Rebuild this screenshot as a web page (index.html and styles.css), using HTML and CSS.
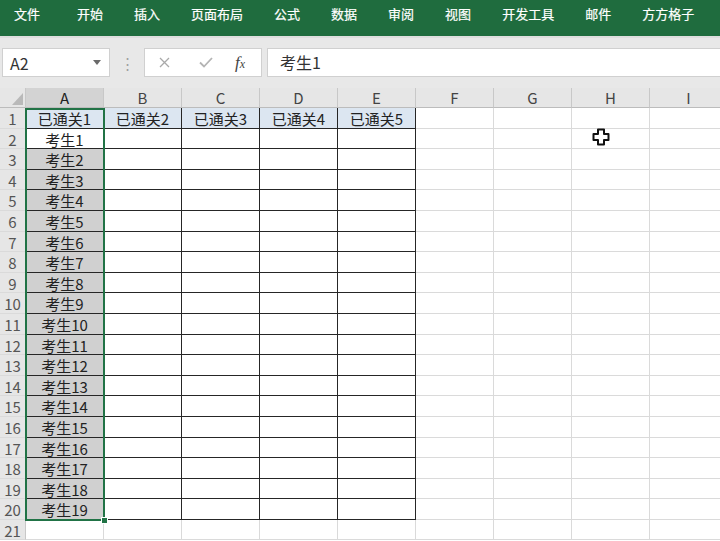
FILE: index.html
```html
<!DOCTYPE html>
<html lang="zh-CN">
<head>
<meta charset="utf-8">
<title>Excel</title>
<link rel="stylesheet" href="styles.css">
</head>
<body>
<div class="ribbon">
  <span class="tab first">文件</span><span class="tab">开始</span><span class="tab">插入</span><span class="tab">页面布局</span><span class="tab">公式</span><span class="tab">数据</span><span class="tab">审阅</span><span class="tab">视图</span><span class="tab">开发工具</span><span class="tab">邮件</span><span class="tab">方方格子</span>
</div>
<div class="fbar">
  <div class="namebox"><span>A2</span><svg class="arrow" width="8" height="5" viewBox="0 0 8 5"><path d="M0 0H8L4 5Z" fill="#6a6a6a"/></svg></div>
  <div class="dots">⋮</div>
  <div class="funcbox">
    <svg class="ic-x" width="11" height="11" viewBox="0 0 11 11"><path d="M1 1L10 10M10 1L1 10" stroke="#a9a9a9" stroke-width="1.3" fill="none"/></svg>
    <svg class="ic-ok" width="14" height="11" viewBox="0 0 14 11"><path d="M1 5.5L5 9.5L13 1" stroke="#b4b4b4" stroke-width="1.8" fill="none"/></svg>
    <span class="fx">f<small>x</small></span>
  </div>
  <div class="input">考生1</div>
</div>
<div class="sheet">
  <div class="corner"><svg width="26" height="20" viewBox="0 0 26 20"><path d="M23 5V17H12Z" fill="#b9b9b9"/></svg></div>
  <div class="ch sel">A</div><div class="ch">B</div><div class="ch">C</div><div class="ch">D</div><div class="ch">E</div><div class="ch">F</div><div class="ch">G</div><div class="ch">H</div><div class="ch">I</div>

  <div class="rh">1</div><div class="c t h">已通关1</div><div class="c t h">已通关2</div><div class="c t h">已通关3</div><div class="c t h">已通关4</div><div class="c t h">已通关5</div><div class="c"></div><div class="c"></div><div class="c"></div><div class="c"></div>
  <div class="rh">2</div><div class="c t">考生1</div><div class="c t"></div><div class="c t"></div><div class="c t"></div><div class="c t"></div><div class="c"></div><div class="c"></div><div class="c"></div><div class="c"></div>
  <div class="rh">3</div><div class="c t g">考生2</div><div class="c t"></div><div class="c t"></div><div class="c t"></div><div class="c t"></div><div class="c"></div><div class="c"></div><div class="c"></div><div class="c"></div>
  <div class="rh">4</div><div class="c t g">考生3</div><div class="c t"></div><div class="c t"></div><div class="c t"></div><div class="c t"></div><div class="c"></div><div class="c"></div><div class="c"></div><div class="c"></div>
  <div class="rh">5</div><div class="c t g">考生4</div><div class="c t"></div><div class="c t"></div><div class="c t"></div><div class="c t"></div><div class="c"></div><div class="c"></div><div class="c"></div><div class="c"></div>
  <div class="rh">6</div><div class="c t g">考生5</div><div class="c t"></div><div class="c t"></div><div class="c t"></div><div class="c t"></div><div class="c"></div><div class="c"></div><div class="c"></div><div class="c"></div>
  <div class="rh">7</div><div class="c t g">考生6</div><div class="c t"></div><div class="c t"></div><div class="c t"></div><div class="c t"></div><div class="c"></div><div class="c"></div><div class="c"></div><div class="c"></div>
  <div class="rh">8</div><div class="c t g">考生7</div><div class="c t"></div><div class="c t"></div><div class="c t"></div><div class="c t"></div><div class="c"></div><div class="c"></div><div class="c"></div><div class="c"></div>
  <div class="rh">9</div><div class="c t g">考生8</div><div class="c t"></div><div class="c t"></div><div class="c t"></div><div class="c t"></div><div class="c"></div><div class="c"></div><div class="c"></div><div class="c"></div>
  <div class="rh">10</div><div class="c t g">考生9</div><div class="c t"></div><div class="c t"></div><div class="c t"></div><div class="c t"></div><div class="c"></div><div class="c"></div><div class="c"></div><div class="c"></div>
  <div class="rh">11</div><div class="c t g">考生10</div><div class="c t"></div><div class="c t"></div><div class="c t"></div><div class="c t"></div><div class="c"></div><div class="c"></div><div class="c"></div><div class="c"></div>
  <div class="rh">12</div><div class="c t g">考生11</div><div class="c t"></div><div class="c t"></div><div class="c t"></div><div class="c t"></div><div class="c"></div><div class="c"></div><div class="c"></div><div class="c"></div>
  <div class="rh">13</div><div class="c t g">考生12</div><div class="c t"></div><div class="c t"></div><div class="c t"></div><div class="c t"></div><div class="c"></div><div class="c"></div><div class="c"></div><div class="c"></div>
  <div class="rh">14</div><div class="c t g">考生13</div><div class="c t"></div><div class="c t"></div><div class="c t"></div><div class="c t"></div><div class="c"></div><div class="c"></div><div class="c"></div><div class="c"></div>
  <div class="rh">15</div><div class="c t g">考生14</div><div class="c t"></div><div class="c t"></div><div class="c t"></div><div class="c t"></div><div class="c"></div><div class="c"></div><div class="c"></div><div class="c"></div>
  <div class="rh">16</div><div class="c t g">考生15</div><div class="c t"></div><div class="c t"></div><div class="c t"></div><div class="c t"></div><div class="c"></div><div class="c"></div><div class="c"></div><div class="c"></div>
  <div class="rh">17</div><div class="c t g">考生16</div><div class="c t"></div><div class="c t"></div><div class="c t"></div><div class="c t"></div><div class="c"></div><div class="c"></div><div class="c"></div><div class="c"></div>
  <div class="rh">18</div><div class="c t g">考生17</div><div class="c t"></div><div class="c t"></div><div class="c t"></div><div class="c t"></div><div class="c"></div><div class="c"></div><div class="c"></div><div class="c"></div>
  <div class="rh">19</div><div class="c t g">考生18</div><div class="c t"></div><div class="c t"></div><div class="c t"></div><div class="c t"></div><div class="c"></div><div class="c"></div><div class="c"></div><div class="c"></div>
  <div class="rh">20</div><div class="c t g">考生19</div><div class="c t"></div><div class="c t"></div><div class="c t"></div><div class="c t"></div><div class="c"></div><div class="c"></div><div class="c"></div><div class="c"></div>
  <div class="rh">21</div><div class="c"></div><div class="c"></div><div class="c"></div><div class="c"></div><div class="c"></div><div class="c"></div><div class="c"></div><div class="c"></div><div class="c"></div>

  <div class="selection"></div>
  <div class="handle"></div>
  <svg class="cursor" width="18" height="18" viewBox="0 0 18 18"><path d="M6 1.5H12V6H16.5V12H12V16.5H6V12H1.5V6H6Z" fill="#fff" stroke="#111" stroke-width="2" stroke-linejoin="round"/></svg>
</div>
</body>
</html>
```
FILE: styles.css
```css
* { box-sizing: border-box; }
body {
  margin: 0;
  width: 720px;
  height: 541px;
  overflow: hidden;
  background: #fff;
  font-family: "Noto Sans CJK SC", "Liberation Sans", sans-serif;
}
.ribbon {
  height: 36px;
  background: #1f6c3e;
  display: flex;
  gap: 31px;
  padding: 4px 0 0 14px;
  color: #fff;
  font-size: 13px;
  line-height: 20px;
  white-space: nowrap;
  -webkit-text-stroke: 0.2px #fff;
}
.ribbon .first { margin-right: 6px; }
.fbar {
  height: 52px;
  background: #e8e8e8;
  border-top: 2px solid #dedede;
  display: flex;
  align-items: flex-start;
  padding-top: 10px;
}
.namebox {
  margin-left: 2px;
  width: 108px;
  height: 29px;
  background: #fff;
  border: 1px solid #d0d0d0;
  display: flex;
  align-items: center;
  justify-content: space-between;
  padding: 0 8px 0 7px;
  font-size: 16px;
  color: #333;
}
.dots {
  width: 34px;
  text-align: center;
  color: #a0a0a0;
  font-size: 15px;
  line-height: 29px;
}
.funcbox {
  width: 118px;
  height: 29px;
  background: #fff;
  border: 1px solid #d0d0d0;
  display: flex;
  align-items: center;
  padding-left: 14px;
}
.ic-x { margin-right: 29px; }
.ic-ok { margin-right: 22px; }
.fx {
  font-family: "Liberation Serif", serif;
  font-style: italic;
  font-size: 17px;
  color: #444;
}
.fx small { font-size: 12px; }
.input {
  flex: 1;
  margin-left: 5px;
  height: 29px;
  background: #fff;
  border: 1px solid #d0d0d0;
  border-right: none;
  padding-left: 12px;
  font-size: 16px;
  line-height: 27px;
  color: #333;
}
.sheet {
  position: relative;
  display: grid;
  grid-template-columns: 26px repeat(9, 78px);
  grid-template-rows: 20px repeat(21, 20.6px);
  width: 728px;
}
.corner {
  background: #e6e6e6;
  border-right: 1px solid #c8c8c8;
  border-bottom: 1px solid #bcbcbc;
}
.corner svg { display: block; }
.ch {
  background: #e6e6e6;
  border-right: 1px solid #c8c8c8;
  border-bottom: 1px solid #bcbcbc;
  text-align: center;
  font-size: 15px;
  line-height: 19px;
  color: #444;
}
.ch.sel { background: #d3d3d3; color: #222; }
.rh {
  background: #e6e6e6;
  border-right: 1px solid #c8c8c8;
  border-bottom: 1px solid #dadada;
  text-align: center;
  font-size: 15px;
  line-height: 20px;
  padding-top: 1px;
  color: #555;
}
.c {
  border-right: 1px solid #dadada;
  border-bottom: 1px solid #dadada;
  text-align: center;
  font-size: 15px;
  line-height: 20px;
  padding-top: 1px;
  color: #222;
  white-space: nowrap;
  overflow: hidden;
}
.c.t { border-right-color: #262626; border-bottom-color: #262626; }
.c.h { background: #dce6f1; }
.c.g { background: #d0d0d0; }
.selection {
  position: absolute;
  left: 25px;
  top: 20px;
  width: 80px;
  height: 413px;
  border: 2px solid #217346;
  pointer-events: none;
}
.handle {
  position: absolute;
  left: 101px;
  top: 429px;
  width: 7px;
  height: 7px;
  background: #217346;
  border: 1px solid #fff;
}
.cursor {
  position: absolute;
  left: 592px;
  top: 40px;
}
```
